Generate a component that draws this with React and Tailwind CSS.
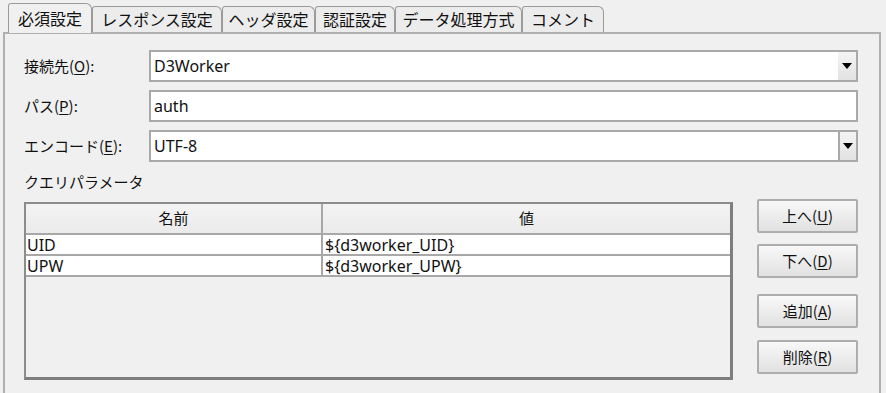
import React from 'react';

const font = { fontFamily: '"Noto Sans CJK JP", "Noto Sans", sans-serif' };
// latin values look wider in the reference, so take Noto Sans first for them
const valueFont = { fontFamily: '"Noto Sans", "Noto Sans CJK JP", sans-serif' };

const tabs = ['必須設定', 'レスポンス設定', 'ヘッダ設定', '認証設定', 'データ処理方式', 'コメント'];
const tabWidths = ['w-[84px]', 'w-[130px]', 'w-[93px]', 'w-[80px]', 'w-[127px]', 'w-[82px]'];

const params = [
  { name: 'UID', value: '${d3worker_UID}' },
  { name: 'UPW', value: '${d3worker_UPW}' },
];

// small helper so the mnemonic letter is underlined
const Mn = ({ pre, ch, post = ')' }) => (
  <>
    {pre}(<span className="underline underline-offset-2">{ch}</span>{post}
  </>
);

const Arrow = () => (
  <svg width="10" height="6" viewBox="0 0 10 6">
    <path d="M0 0 H10 L5 6 Z" fill="#000" />
  </svg>
);

const Field = ({ label, value, combo, split }) => (
  <div className="flex items-center h-[32px]">
    <div className="w-[125px] text-[15px] text-[#111]">{label}</div>
    <div className="flex-1 h-full flex bg-white border-2 border-[#a9a9a9]">
      <div className="flex-1 flex items-center pl-[3px] text-[16px] text-[#111]" style={valueFont}>{value}</div>
      {combo && (
        <div
          className={`w-[18px] h-full flex items-center justify-center bg-gradient-to-b from-[#f4f4f4] to-[#e2e2e2] ${
            split ? 'border-l-2 border-[#a9a9a9]' : ''
          }`}
        >
          <Arrow />
        </div>
      )}
    </div>
  </div>
);

const SideButton = ({ children, className = '' }) => (
  <button
    className={`w-[101px] h-[34px] flex items-center justify-center text-[15px] text-[#111] bg-gradient-to-b from-[#f8f8f8] to-[#e1e1e1] border-2 border-[#adadad] rounded-[2px] ${className}`}
  >
    {children}
  </button>
);

export default function App() {
  return (
    <div className="w-[886px] h-[393px] bg-[#f0f0f0] overflow-hidden flex flex-col" style={font}>
      {/* Tab strip */}
      <div className="h-[32px] flex items-end pl-[8px] shrink-0">
        {tabs.map((t, i) => (
          <div
            key={t}
            className={`${tabWidths[i]} flex items-center justify-center text-[16px] text-[#111] border-l border-t border-r border-[#9a9a9a] rounded-tr-[6px] rounded-tl-[3px] ${
              i === 0 ? 'h-[30px] bg-[#f0f0f0] -mb-px relative z-10 pb-[2px]' : 'h-[26px] bg-[#ececec] pb-[1px]'
            }`}
          >
            {t}
          </div>
        ))}
      </div>

      {/* Panel */}
      <div className="flex-1 ml-[3px] mr-[5px] border-l-2 border-t-2 border-r-2 border-[#b0b0b0] pl-[19px] pr-[21px] pt-[16px]">
        <div className="flex flex-col gap-[8px]">
          <Field label={<Mn pre="接続先" ch="O" post="):" />} value="D3Worker" combo />
          <Field label={<Mn pre="パス" ch="P" post="):" />} value="auth" />
          <Field label={<Mn pre="エンコード" ch="E" post="):" />} value="UTF-8" combo split />
        </div>

        <div className="mt-[9px] h-[22px] text-[15px] text-[#111] flex items-center">クエリパラメータ</div>

        <div className="flex mt-[10px] gap-[24px]">
          {/* Table */}
          <div className="w-[709px] h-[178px] -mt-[1px] border-t-2 border-l-2 border-[#8c8c8c] border-r-[3px] border-b-[3px] border-r-[#7e7e7e] border-b-[#7e7e7e] bg-[#f0f0f0] flex flex-col">
            <div className="flex h-[31px] bg-gradient-to-b from-[#f3f3f3] to-[#ebebeb] border-b-2 border-[#a8a8a8]">
              <div className="w-[297px] flex items-center justify-center text-[15px] text-[#111] border-r-2 border-[#a8a8a8]">名前</div>
              <div className="flex-1 flex items-center justify-center text-[15px] text-[#111]">値</div>
            </div>
            {params.map((p) => (
              <div key={p.name} className="flex h-[21px] bg-white border-b-2 border-[#a8a8a8]" style={valueFont}>
                <div className="w-[297px] flex items-center pl-[1px] text-[16px] text-[#111] border-r-2 border-[#a8a8a8]">{p.name}</div>
                <div className="flex-1 flex items-center pl-[2px] text-[16px] text-[#111]">{p.value}</div>
              </div>
            ))}
          </div>

          {/* Buttons */}
          <div className="flex flex-col -mt-[4px]">
            <SideButton><Mn pre="上へ" ch="U" /></SideButton>
            <SideButton className="mt-[11px]"><Mn pre="下へ" ch="D" /></SideButton>
            <SideButton className="mt-[16px]"><Mn pre="追加" ch="A" /></SideButton>
            <SideButton className="mt-[12px]"><Mn pre="削除" ch="R" /></SideButton>
          </div>
        </div>
      </div>
    </div>
  );
}
